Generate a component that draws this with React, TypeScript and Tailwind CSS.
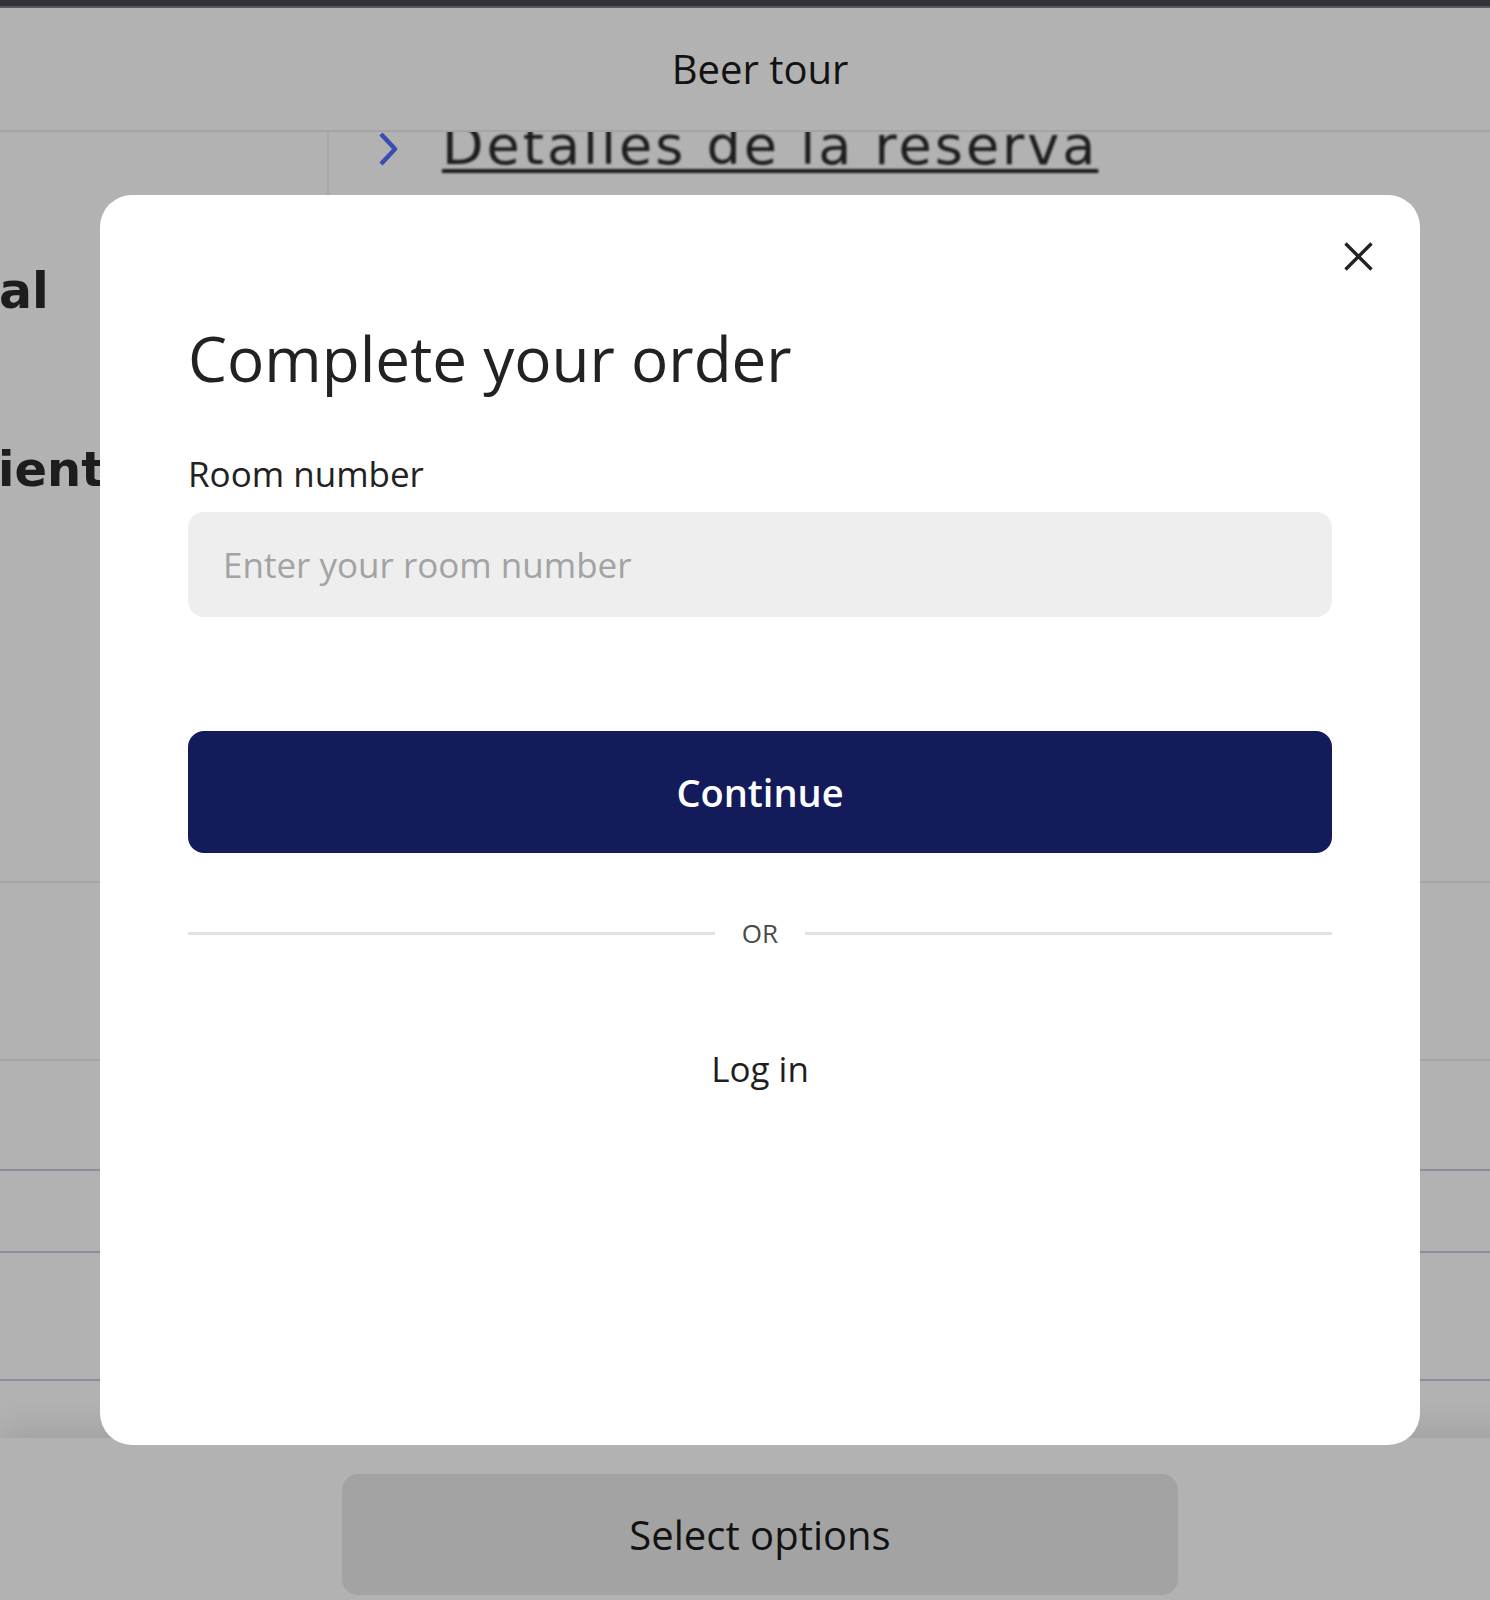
import React, { useState } from 'react';

const CloseIcon: React.FC = () => (
  <svg width="29" height="29" viewBox="0 0 29 29" fill="none">
    <path d="M1.5 1.5 27.5 27.5M27.5 1.5 1.5 27.5" stroke="#222222" strokeWidth="3.4" />
  </svg>
);

const Chevron: React.FC = () => (
  <svg width="24" height="36" viewBox="0 0 24 36" fill="none">
    <path d="M5 3 19 18 5 33" stroke="#5470ff" strokeWidth="4.5" strokeLinejoin="round" />
  </svg>
);

// the page behind the dialog, dimmed by the overlay
const BackgroundPage: React.FC = () => (
  <>
    <div className="h-[6px] bg-[#49494f]" />
    <div className="h-[2px] bg-[#7e7e84]" />
    <header className="h-[124px] shrink-0 border-b-2 border-[#ededed] flex items-center justify-center">
      <span className="text-[40px] leading-none text-[#1a1a1a]">Beer tour</span>
    </header>

    <div className="flex-1 overflow-hidden flex flex-col font-['DejaVu_Sans',sans-serif] text-[#2a2a2a]">
      <div className="h-[751px] shrink-0 border-b-2 border-[#ececec] flex">
        <div className="w-[329px] shrink-0 border-r-2 border-[#f0f0f0] flex flex-col blur-[0.7px]">
          <span className="mt-[135px] -ml-[1px] text-[49px] leading-none font-bold">al</span>
          <span className="mt-[129px] -ml-[2px] text-[48px] leading-none font-bold">ient</span>
        </div>
        <div className="flex-1 flex items-start pl-[47px]">
          <div className="-mt-[1px] blur-[0.5px]">
            <Chevron />
          </div>
          <span className="ml-[42px] -mt-[13px] text-[54px] leading-none tracking-[3px] underline decoration-4 underline-offset-[5px] blur-[1px]">
            Detalles de la reserva
          </span>
        </div>
      </div>
      <div className="h-[178px] shrink-0 border-b-2 border-[#ececec]" />
      <div className="h-[110px] shrink-0 border-b-2 border-[#c5ccdf]" />
      <div className="h-[82px] shrink-0 border-b-2 border-[#c5ccdf]" />
      <div className="h-[128px] shrink-0 border-b-2 border-[#c5ccdf]" />
    </div>

    <div className="h-[162px] shrink-0 bg-white relative shadow-[0_-12px_28px_rgba(0,0,0,0.09)] flex justify-center pt-[36px]">
      <button className="w-[836px] h-[121px] rounded-[16px] bg-[#eaeaea] text-[40px] font-medium text-[#1a1a1a]">
        Select options
      </button>
    </div>
  </>
);

const App: React.FC = () => {
  const [room, setRoom] = useState('');

  return (
    <div className="w-full h-[1600px] overflow-hidden bg-white font-['Open_Sans',sans-serif]">
      <div className="w-[1520px] h-full relative flex flex-col">
        <BackgroundPage />

        <div className="absolute inset-0 bg-black/30 flex justify-center items-start pt-[195px]">
          <div className="w-[1320px] h-[1250px] bg-white rounded-[32px] relative px-[88px] pt-[132px] flex flex-col">
            <button className="absolute top-[47px] right-[47px]">
              <CloseIcon />
            </button>

            <h2 className="text-[62px] leading-[62px] font-medium text-[#222222]">Complete your order</h2>

            <label className="mt-[67px] text-[35px] leading-[35px] font-medium text-[#222222]">Room number</label>
            <input
              type="text"
              value={room}
              onChange={(e) => setRoom(e.target.value)}
              placeholder="Enter your room number"
              className="mt-[21px] h-[105px] w-full rounded-[16px] bg-[#eeeeee] px-[35px] text-[35px] text-[#222222] placeholder:text-[#a3a3a3] outline-none"
            />

            <button className="mt-[114px] h-[122px] w-full rounded-[16px] bg-[#131b5b] text-white text-[38px] font-semibold">
              Continue
            </button>

            <div className="mt-[67px] h-[26px] flex items-center gap-[27px]">
              <div className="flex-1 h-[3px] bg-[#e2e2e2]" />
              <span className="text-[26px] leading-[26px] text-[#4a4a4a]">OR</span>
              <div className="flex-1 h-[3px] bg-[#e2e2e2]" />
            </div>

            <button className="mt-[105px] self-center text-[35px] leading-[35px] text-[#1f1f1f]">Log in</button>
          </div>
        </div>
      </div>
    </div>
  );
};

export default App;
